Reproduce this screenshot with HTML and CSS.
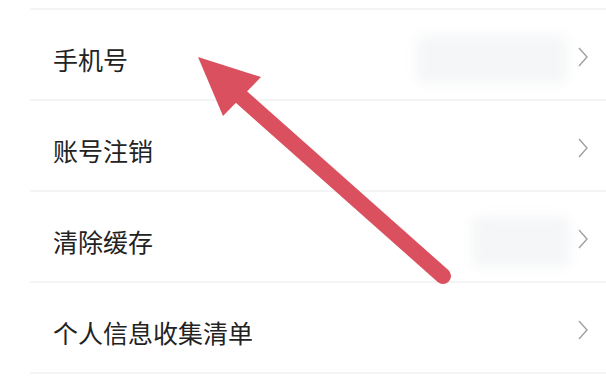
FILE: index.html
```html
<!DOCTYPE html>
<html lang="zh-CN">
<head>
<meta charset="utf-8">
<title>设置</title>
<link rel="stylesheet" href="styles.css">
</head>
<body>
<div class="page">
  <div class="list">
    <div class="divider"></div>
    <div class="row">
      <span class="label">手机号</span>
      <span class="value value-phone"></span>
      <svg class="chev" viewBox="0 0 10 20" width="10" height="20"><polyline points="1,1 9,10 1,19"/></svg>
    </div>
    <div class="divider"></div>
    <div class="row">
      <span class="label">账号注销</span>
      <svg class="chev" viewBox="0 0 10 20" width="10" height="20"><polyline points="1,1 9,10 1,19"/></svg>
    </div>
    <div class="divider"></div>
    <div class="row">
      <span class="label">清除缓存</span>
      <span class="value value-cache"></span>
      <svg class="chev" viewBox="0 0 10 20" width="10" height="20"><polyline points="1,1 9,10 1,19"/></svg>
    </div>
    <div class="divider"></div>
    <div class="row">
      <span class="label">个人信息收集清单</span>
      <svg class="chev" viewBox="0 0 10 20" width="10" height="20"><polyline points="1,1 9,10 1,19"/></svg>
    </div>
    <div class="divider"></div>
  </div>
  <svg class="arrow" viewBox="0 0 606 376" width="606" height="376">
    <line x1="443" y1="276" x2="238" y2="94" />
    <polygon points="198,57 261,77 223,116" />
  </svg>
</div>
</body>
</html>
```
FILE: styles.css
```css
html, body {
  margin: 0;
  padding: 0;
  background: #ffffff;
}
body {
  width: 606px;
  height: 376px;
  overflow: hidden;
  font-family: "Noto Sans CJK SC", "Noto Sans", sans-serif;
}
.page {
  position: relative;
  width: 606px;
  height: 376px;
  padding-top: 8px;
  box-sizing: border-box;
}
.list {
  margin-left: 30px;
  display: flex;
  flex-direction: column;
}
.divider {
  height: 2px;
  background: #f4f4f5;
}
.row {
  height: 89px;
  box-sizing: border-box;
  padding: 10px 18px 0 23px;
  display: flex;
  align-items: center;
}
.label {
  font-size: 25px;
  line-height: 1;
  color: #222222;
  flex: 1;
}
.value {
  display: block;
  background: #f5f6f8;
  filter: blur(6px);
  border-radius: 6px;
}
.value-phone {
  width: 150px;
  height: 48px;
  margin-right: 11px;
  margin-bottom: 2px;
}
.value-cache {
  width: 98px;
  height: 50px;
  margin-right: 8px;
}
.chev {
  flex: none;
  margin-bottom: 6px;
}
.chev polyline {
  fill: none;
  stroke: #a0a0a0;
  stroke-width: 1.4;
}
.arrow {
  position: absolute;
  left: 0;
  top: 0;
}
.arrow line {
  stroke: #da505f;
  stroke-width: 16;
  stroke-linecap: round;
}
.arrow polygon {
  fill: #da505f;
}
```
